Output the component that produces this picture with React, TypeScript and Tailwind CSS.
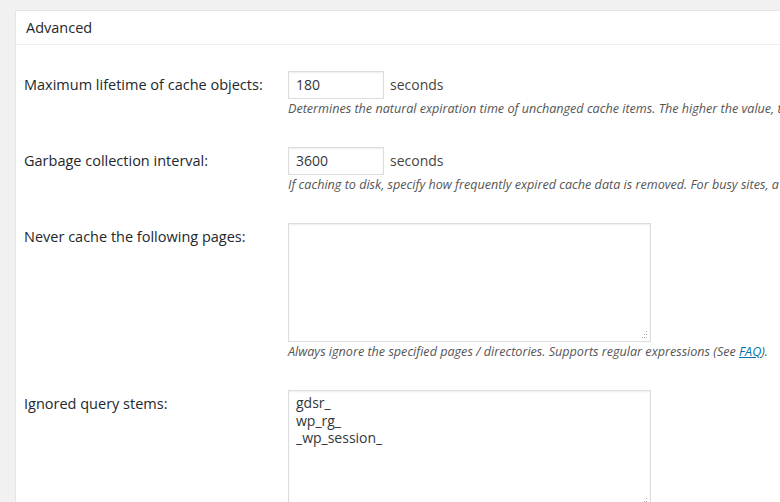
import React from "react";

const font = { fontFamily: '"Open Sans", "Noto Sans", sans-serif' };

function Row({ label, children, className = "" }: { label: string; children: React.ReactNode; className?: string }) {
  return (
    <div className={`flex ${className}`}>
      <div className="w-[272px] shrink-0 pl-[8px] text-[14.5px] text-[#23282d]">{label}</div>
      <div className="flex-1 min-w-0">{children}</div>
    </div>
  );
}

function Grip() {
  return (
    <svg className="absolute right-[2px] bottom-[2px]" width="8" height="8" viewBox="0 0 8 8">
      <g fill="#b0b0b0">
        <rect x="6" y="0" width="1" height="1" />
        <rect x="4" y="3" width="1" height="1" />
        <rect x="6" y="3" width="1" height="1" />
        <rect x="2" y="6" width="1" height="1" />
        <rect x="4" y="6" width="1" height="1" />
        <rect x="6" y="6" width="1" height="1" />
      </g>
    </svg>
  );
}

export default function App() {
  return (
    <div className="w-[780px] h-[502px] overflow-hidden bg-[#f1f1f1] pl-[15px] pt-[10px]" style={font}>
      <div className="bg-white border-l border-t border-[#e5e5e5] h-[600px] w-[800px]">
        <div className="h-[34px] border-b border-[#eeeeee] pl-[10px] pt-[6px] text-[14.5px] text-[#23282d]">Advanced</div>
        <div className="pt-[26px]">
          <Row label="Maximum lifetime of cache objects:" className="leading-[28px]">
            <div className="flex items-center">
              <div className="w-[96px] h-[28px] border border-[#dddddd] pl-[7px] text-[14px] text-[#32373c] leading-[26px] shadow-[inset_0_1px_2px_rgba(0,0,0,0.07)]">180</div>
              <span className="ml-[6px] text-[14px] text-[#444]">seconds</span>
            </div>
            <div className="mt-[1px] text-[12.6px] italic text-[#555] whitespace-nowrap leading-[18px]">
              Determines the natural expiration time of unchanged cache items. The higher the value, the larger the cache.
            </div>
          </Row>
          <Row label="Garbage collection interval:" className="mt-[29px] leading-[28px]">
            <div className="flex items-center">
              <div className="w-[96px] h-[28px] border border-[#dddddd] pl-[7px] text-[14px] text-[#32373c] leading-[26px] shadow-[inset_0_1px_2px_rgba(0,0,0,0.07)]">3600</div>
              <span className="ml-[6px] text-[14px] text-[#444]">seconds</span>
            </div>
            <div className="mt-[1px] text-[12.6px] italic text-[#555] whitespace-nowrap leading-[18px]">
              If caching to disk, specify how frequently expired cache data is removed. For busy sites, a lower value is best.
            </div>
          </Row>
          <Row label="Never cache the following pages:" className="mt-[29px] leading-[28px]">
            <div className="relative w-[363px] h-[119px] border border-[#dddddd] shadow-[inset_0_1px_2px_rgba(0,0,0,0.07)]">
              <Grip />
            </div>
            <div className="mt-[1px] text-[12.6px] italic text-[#555] whitespace-nowrap leading-[18px]">
              Always ignore the specified pages / directories. Supports regular expressions (See{" "}
              <span className="text-[#0073aa] underline">FAQ</span>).
            </div>
          </Row>
          <Row label="Ignored query stems:" className="mt-[29px] leading-[28px]">
            <div className="relative w-[363px] h-[119px] border border-[#dddddd] shadow-[inset_0_1px_2px_rgba(0,0,0,0.07)] pl-[7px] pt-[3px] text-[14px] leading-[17.5px] text-[#32373c]">
              <div>gdsr_</div>
              <div>wp_rg_</div>
              <div>_wp_session_</div>
              <Grip />
            </div>
          </Row>
        </div>
      </div>
    </div>
  );
}
